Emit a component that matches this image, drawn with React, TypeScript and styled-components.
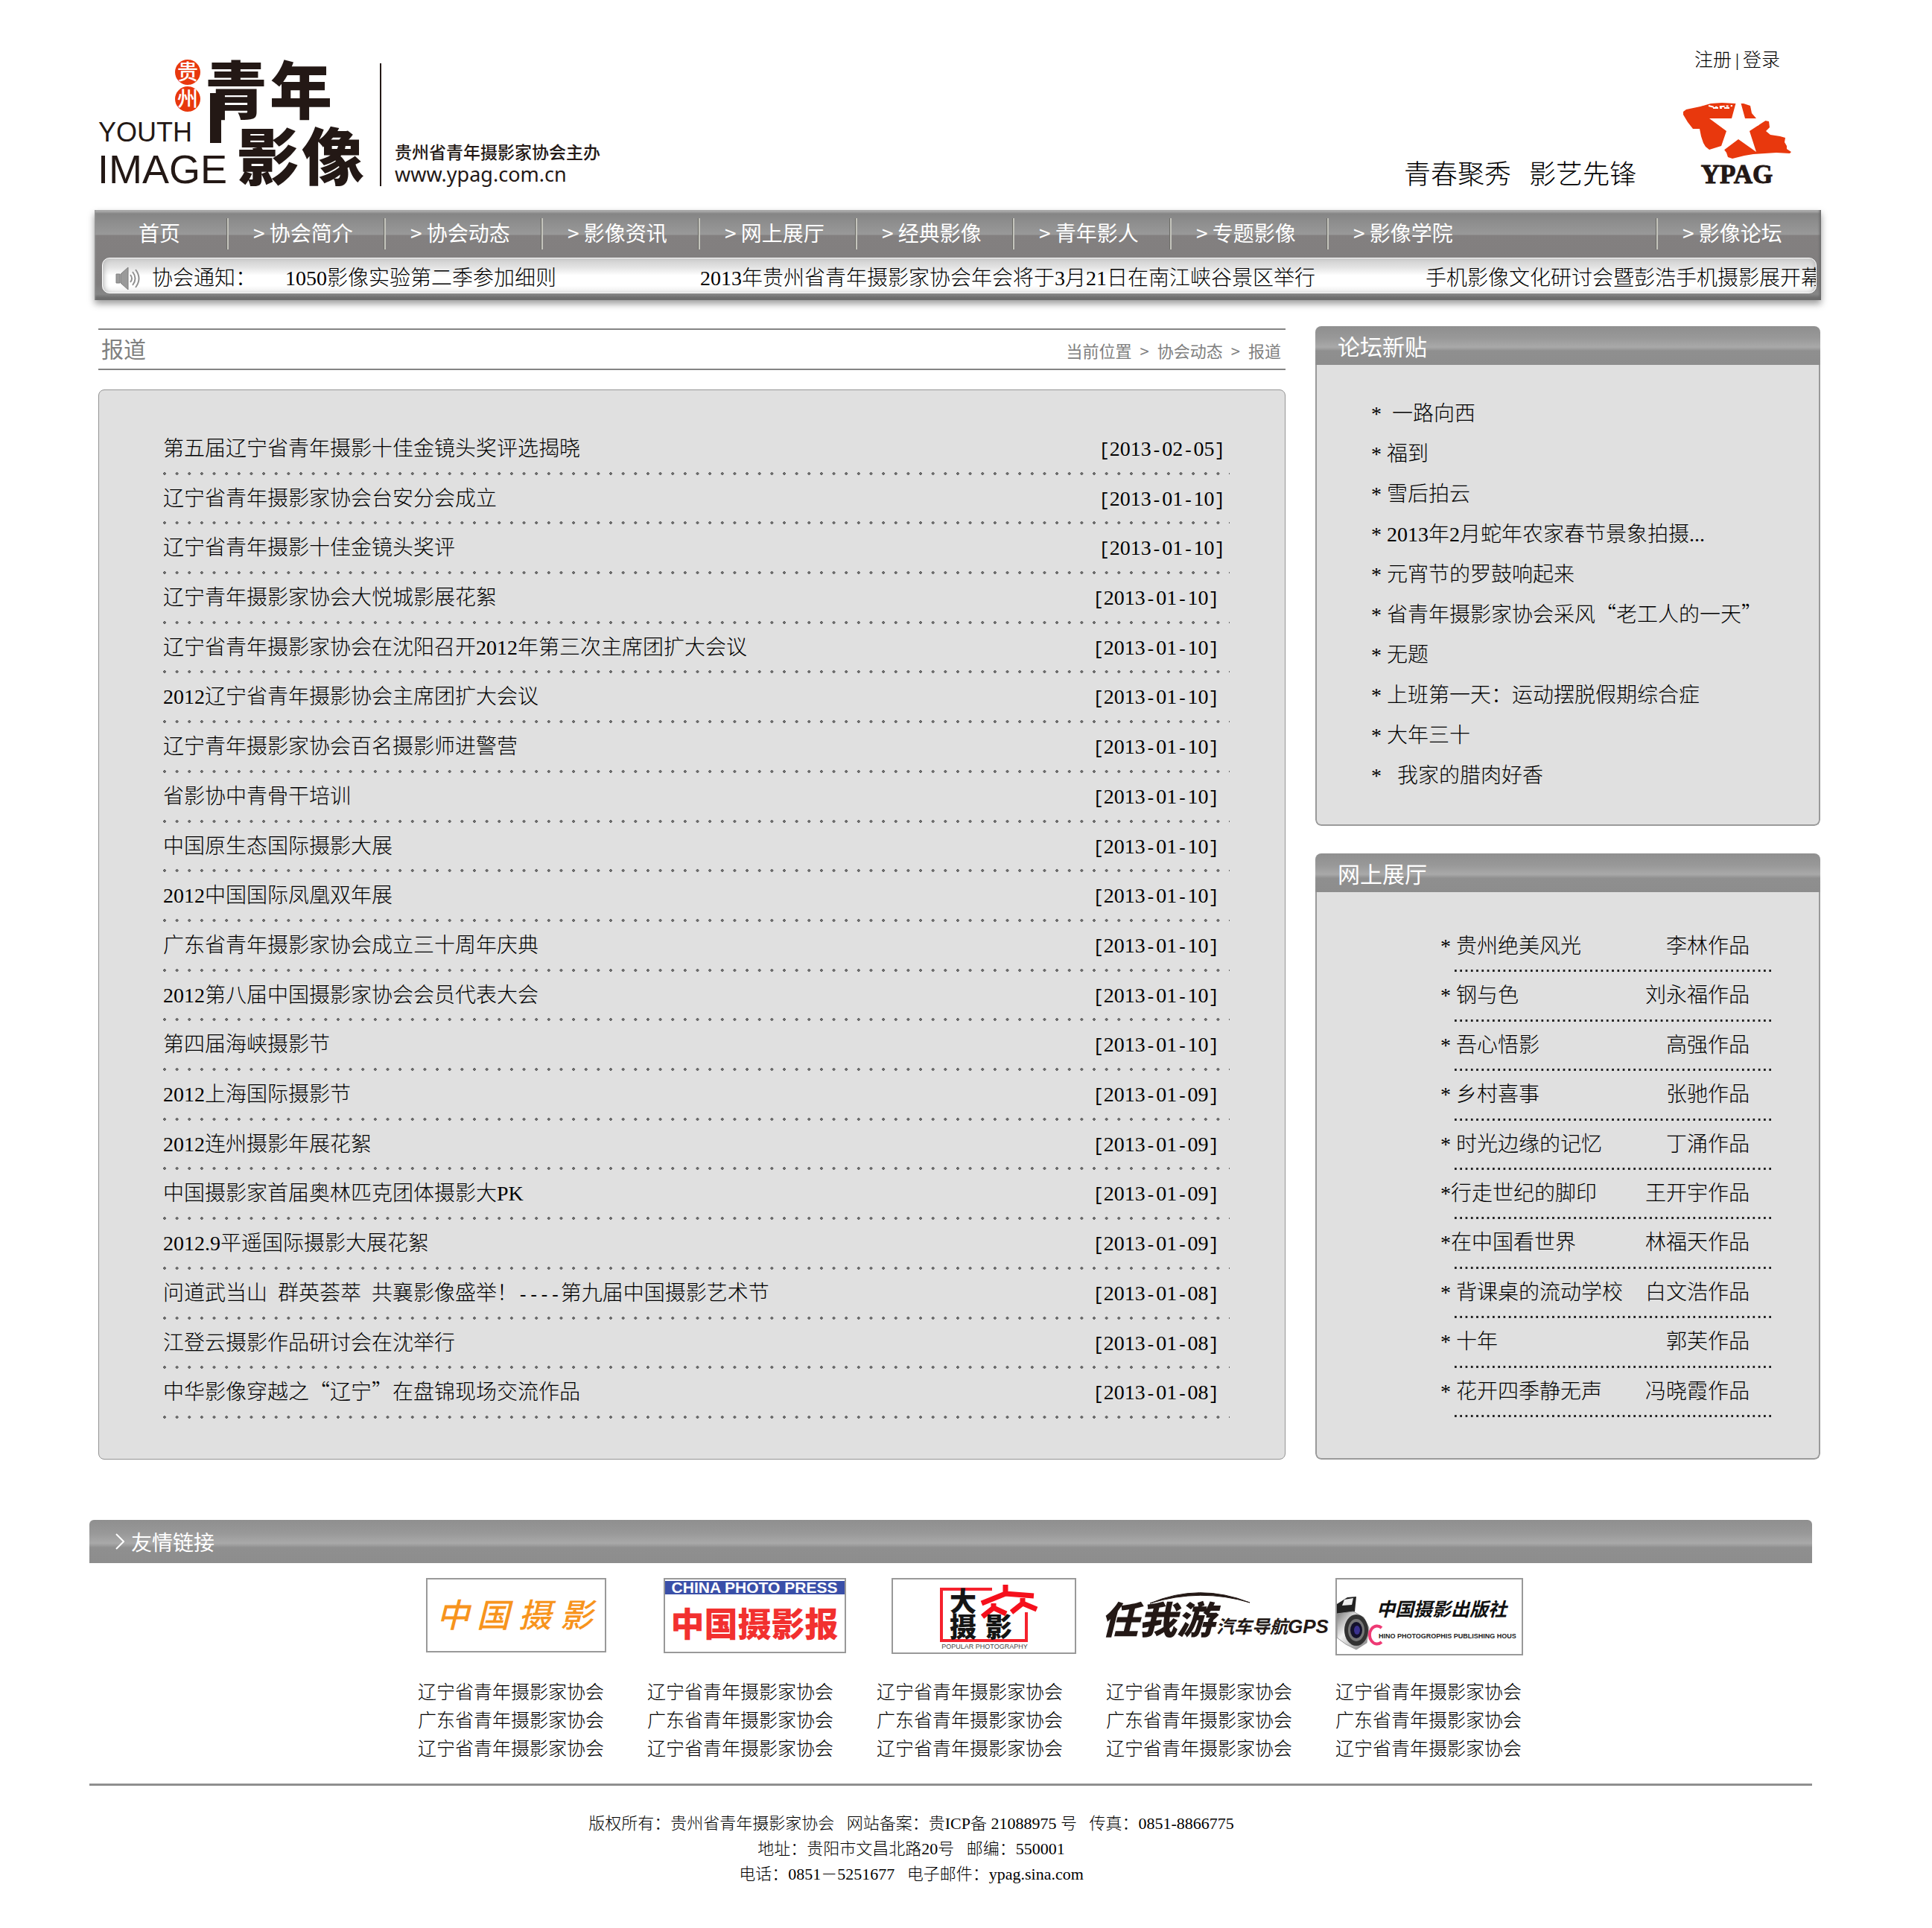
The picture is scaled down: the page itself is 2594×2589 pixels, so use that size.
import React from "react";
import styled, { createGlobalStyle } from "styled-components";

const song = `"Liberation Serif", "Noto Sans CJK SC", serif`;
const hei = `"Noto Sans CJK SC", sans-serif`;
const ink = "#231815";

const GlobalStyle = createGlobalStyle`
  *, *::before, *::after { box-sizing: border-box; }
  body { margin: 0; background: #fff; color: #000; font-family: ${song}; font-size: 28px; font-weight: 300; }
  a { color: inherit; text-decoration: none; }
  a:hover { text-decoration: underline; }
  ul, h1, h2, p { margin: 0; padding: 0; font-weight: inherit; }
  ul { list-style: none; }
  svg { display: block; flex: none; }
`;

const Shell = styled.div`
  padding: 0 149px 0 132px;
`;

const Header = styled.header`
  display: flex;
  justify-content: space-between;
  align-items: flex-end;
  padding: 64px 37px 32px 0;
`;

const Brand = styled.div`
  display: flex;
  align-items: flex-end;
`;

const BrandText = styled.div`
  margin-left: 20px;
  padding-left: 18px;
  height: 165px;
  border-left: 2px solid ${ink};
  display: flex;
  flex-direction: column;
  justify-content: flex-end;
  color: ${ink};
`;

const Host = styled.p`
  font: 500 23px/30px ${hei};
`;

const Site = styled.a`
  font: 400 27px/32px "Noto Sans", sans-serif;
`;

const HeaderSide = styled.div`
  display: flex;
  flex-direction: column;
  align-items: flex-end;
  gap: 39px;
`;

const Account = styled.div`
  display: flex;
  gap: 5px;
  padding-right: 18px;
  font-size: 25px;
  line-height: 34px;
`;

const Motto = styled.div`
  display: flex;
  align-items: flex-end;
  gap: 61px;
`;

const Slogan = styled.p`
  display: flex;
  gap: 24px;
  font-size: 36px;
  line-height: 30px;
`;

const NavBox = styled.div`
  margin-left: -5px;
  padding: 0 6px 9px 10px;
  background: linear-gradient(
    #b8b8b8 0, #a6a6a6 2px, #858585 5px, #8c8c8c 14px, #999 33px,
    #838080 34px, #7f7d7d 100px, #868686 113px, #6c6c6c 118px, #6c6c6c 100%
  );
  box-shadow: 0 5px 9px rgba(0, 0, 0, 0.4), inset -3px 0 3px -1px #6a6a6a, inset 2px 0 2px -1px #999;
`;

const Menu = styled.nav`
  display: flex;
  align-items: center;
  height: 64px;
`;

const MenuItem = styled.a<{ $last?: boolean }>`
  width: ${(p) => (p.$last ? 215 : 211)}px;
  padding: 0 0 4px 33px;
  margin-left: ${(p) => (p.$last ? "auto" : "0")};
  border-left: 2px solid #c4c4bc;
  box-shadow: -1px 0 0 #6b6b66;
  line-height: 38px;
  color: #fff;
  font-family: ${hei};
  font-weight: 400;
  white-space: nowrap;
`;

const HomeItem = styled(MenuItem)`
  width: 168px;
  padding-left: 49px;
  border-left: 0;
  box-shadow: none;
`;

const Notice = styled.div`
  display: flex;
  align-items: center;
  height: 48px;
  padding: 8px 0 0 17px;
  border: 1px solid #fff;
  border-radius: 10px;
  background: linear-gradient(#cdcdcd, #e2e2e2 25%, #fff 50%, #fff 80%, #ececec);
  box-shadow: inset 5px 0 6px -3px #bbb, inset -5px 0 6px -3px #bbb;
  overflow: hidden;
  white-space: nowrap;
  line-height: 40px;
`;

const NoticeLabel = styled.span`
  width: 179px;
  margin-left: 16px;
  flex: none;
`;

const NoticeLink = styled.a<{ $width: number }>`
  flex: 0 0 ${(p) => p.$width}px;
`;

const Main = styled.main`
  display: grid;
  grid-template-columns: minmax(0, 1fr) 678px;
  column-gap: 40px;
  margin-top: 35px;
  padding-right: 1px;
`;

const Reports = styled.section`
  display: flex;
  flex-direction: column;
  padding-top: 3px;
`;

const TitleBar = styled.div`
  display: flex;
  justify-content: space-between;
  align-items: center;
  height: 56px;
  padding: 0 6px 4px 4px;
  border: solid #848484;
  border-width: 2px 0;
  color: #808080;
  font-family: ${hei};
`;

const PageTitle = styled.h1`
  font-size: 30px;
  line-height: 40px;
  font-weight: 400;
`;

const Crumbs = styled.nav`
  display: flex;
  gap: 11px;
  padding-top: 6px;
  font-size: 22px;
  line-height: 32px;
  font-weight: 400;
`;

const Panel = styled.div`
  flex: 1;
  margin-top: 26px;
  padding: 47px 74px 54px 86px;
  border: 1px solid #949494;
  border-radius: 8px;
  background: #e0e0e0;
`;

const ReportList = styled.ul`
  display: grid;
  grid-template-rows: repeat(20, 1fr);
  min-height: 1334px;
`;

const ReportRow = styled.li`
  display: flex;
  justify-content: space-between;
  line-height: 64px;
  white-space: pre;
  background: radial-gradient(circle at 2px 2px, #aaa 0, #555 1px, #666 2px, transparent 2px) 0 100% /
    calc(100% / 86) 4px repeat-x;
`;

const ReportDate = styled.time<{ $wide: boolean }>`
  padding-right: ${(p) => (p.$wide ? 6 : 14)}px;
`;

const Cjk = styled.span`
  font-family: ${hei};
  line-height: 1;
`;

const Mono = styled.span`
  font-family: "Liberation Mono", monospace;
  font-size: 24px;
  line-height: 1;
`;

const Side = styled.aside`
  display: flex;
  flex-direction: column;
  gap: 37px;
`;

const Box = styled.section`
  border-radius: 8px;
  overflow: hidden;
`;

const shine = `linear-gradient(#8f8f8f, #989898 30%, #a9a9a9 54%, #8f8f8f 64%, #8d8d8d)`;

const BoxTitle = styled.h2`
  padding-left: 30px;
  background: ${shine};
  color: #fff;
  font: 400 30px/52px ${hei};
`;

const BoxBody = styled.div`
  border: solid #9a9a9a;
  border-width: 0 2px 2px;
  border-radius: 0 0 8px 8px;
  background: #e0e0e0;
`;

const ForumList = styled.ul`
  padding: 39px 0 38px 73px;
  line-height: 54px;
  white-space: pre;
`;

const ShowList = styled.ul`
  display: grid;
  grid-template-rows: repeat(10, 1fr);
  min-height: 760px;
  padding: 41px 60px 55px 184px;
`;

const ShowRow = styled.li`
  display: flex;
  justify-content: space-between;
  padding-right: 33px;
  line-height: 63px;
  white-space: pre;
  background: linear-gradient(90deg, #222 3px, transparent 3px) 1px 100% / calc(100% / 59) 3px repeat-x;
`;

const ShowName = styled.a`
  margin-left: -18px;
`;

const Friends = styled.section`
  margin-top: 81px;
  padding: 0 161px 0 120px;
`;

const FriendsTitle = styled.h2`
  display: flex;
  align-items: center;
  gap: 9px;
  height: 58px;
  padding-left: 35px;
  border-radius: 6px 6px 0 0;
  background: ${shine};
  color: #fff;
  font: 400 28px/40px ${hei};
`;

const FriendsBody = styled.div`
  display: flex;
  flex-direction: column;
  align-items: center;
  gap: 31px;
  padding: 20px 0 27px 53px;
  border-bottom: 3px solid #8f8f8f;
`;

const LogoRow = styled.div`
  display: grid;
  grid-template-columns: 319px 306px 283px 313px 252px;
  width: 1484px;
  padding-left: 11px;
`;

const LinkGrid = styled.div`
  display: grid;
  grid-template-columns: repeat(4, 308px) 252px;
  width: 1484px;
  font-size: 25px;
  line-height: 38px;
`;

const Footer = styled.footer`
  padding: 34px 267px 55px 120px;
  text-align: center;
  font-size: 22px;
  line-height: 34px;
  white-space: pre-wrap;
`;

const menu = ["协会简介", "协会动态", "影像资讯", "网上展厅", "经典影像", "青年影人", "专题影像", "影像学院"];

const notices = [
  { text: "1050影像实验第二季参加细则", width: 557 },
  { text: "2013年贵州省青年摄影家协会年会将于3月21日在南江峡谷景区举行", width: 974 },
  { text: "手机影像文化研讨会暨彭浩手机摄影展开幕", width: 540 },
];

const reports: [string, string][] = [
  ["第五届辽宁省青年摄影十佳金镜头奖评选揭晓", "2013-02-05"],
  ["辽宁省青年摄影家协会台安分会成立", "2013-01-10"],
  ["辽宁省青年摄影十佳金镜头奖评", "2013-01-10"],
  ["辽宁青年摄影家协会大悦城影展花絮", "2013-01-10"],
  ["辽宁省青年摄影家协会在沈阳召开2012年第三次主席团扩大会议", "2013-01-10"],
  ["2012辽宁省青年摄影协会主席团扩大会议", "2013-01-10"],
  ["辽宁青年摄影家协会百名摄影师进警营", "2013-01-10"],
  ["省影协中青骨干培训", "2013-01-10"],
  ["中国原生态国际摄影大展", "2013-01-10"],
  ["2012中国国际凤凰双年展", "2013-01-10"],
  ["广东省青年摄影家协会成立三十周年庆典", "2013-01-10"],
  ["2012第八届中国摄影家协会会员代表大会", "2013-01-10"],
  ["第四届海峡摄影节", "2013-01-10"],
  ["2012上海国际摄影节", "2013-01-09"],
  ["2012连州摄影年展花絮", "2013-01-09"],
  ["中国摄影家首届奥林匹克团体摄影大PK", "2013-01-09"],
  ["2012.9平遥国际摄影大展花絮", "2013-01-09"],
  ["问道武当山  群英荟萃  共襄影像盛举！----第九届中国摄影艺术节", "2013-01-08"],
  ["江登云摄影作品研讨会在沈举行", "2013-01-08"],
  ["中华影像穿越之“辽宁”在盘锦现场交流作品", "2013-01-08"],
];

const posts = [
  "*  一路向西",
  "* 福到",
  "* 雪后拍云",
  "* 2013年2月蛇年农家春节景象拍摄...",
  "* 元宵节的罗鼓响起来",
  "* 省青年摄影家协会采风“老工人的一天”",
  "* 无题",
  "* 上班第一天：运动摆脱假期综合症",
  "* 大年三十",
  "*   我家的腊肉好香",
];

const shows: [string, string][] = [
  ["* 贵州绝美风光", "李林作品"],
  ["* 钢与色", "刘永福作品"],
  ["* 吾心悟影", "高强作品"],
  ["* 乡村喜事", "张驰作品"],
  ["* 时光边缘的记忆", "丁涌作品"],
  ["*行走世纪的脚印", "王开宇作品"],
  ["*在中国看世界", "林福天作品"],
  ["* 背课桌的流动学校", "白文浩作品"],
  ["* 十年", "郭芙作品"],
  ["* 花开四季静无声", "冯晓霞作品"],
];

const partners = ["辽宁省青年摄影家协会", "广东省青年摄影家协会", "辽宁省青年摄影家协会"];

const typeset = (text: string) =>
  text.split(/([“”]|[[\]-]+)/).map((part, i) => {
    if (i % 2 === 0) return part;
    const Face = /[“”]/.test(part) ? Cjk : Mono;
    return <Face key={i}>{part}</Face>;
  });

const YouthImageLogo = () => (
  <svg width="358" height="172" viewBox="132 79 358 172" role="img" aria-label="贵州青年影像 YOUTH IMAGE">
    <g fill="#e8380d">
      <ellipse cx="252" cy="98" rx="17" ry="17" />
      <ellipse cx="252" cy="134" rx="17" ry="17" />
    </g>
    <g fill="#fff" fontFamily="Noto Sans CJK SC" fontWeight="500" fontSize="28" textAnchor="middle">
      <text x="252" y="108">贵</text>
      <text x="252" y="144">州</text>
    </g>
    <g fill={ink}>
      <g fontFamily="Liberation Sans">
        <text x="132" y="191" fontSize="36">YOUTH</text>
        <text x="131" y="247" fontSize="54">IMAGE</text>
      </g>
      <g fontFamily="Noto Sans CJK SC" fontWeight="900" fontSize="84">
        <text x="275" y="154">青</text>
        <text x="362" y="154">年</text>
        <text x="318" y="243">影</text>
        <text x="405" y="243">像</text>
      </g>
      <rect x="282" y="126" width="15" height="67" />
    </g>
  </svg>
);

const Emblem = () => (
  <svg width="150" height="113" viewBox="2258 138 150 113" role="img" aria-label="YPAG">
    <path
      fill="#e8380d"
      d="M2260 151L2264 148 2283 144 2290 142 2297 140 2312 139 2330 140 2341 140 2350 143 2352 153 2358 160 2360 170
        2364 166 2370 163 2375 164 2376 172 2371 177 2377 182 2390 184 2397 186 2396 192 2399 197 2399 201 2405 205 2403 207
        2385 206 2354 208 2342 210 2326 214 2320 212 2318 206 2315 202 2320 196 2311 197 2295 202 2290 198 2287 193
        2284 184 2282 174 2273 174 2266 165 2260 155z"
    />
    <path
      fill="#fff"
      d="M2331 138H2337L2343 160H2375L2349 177 2358 205 2334 188 2314 203 2309 203 2318 177 2295 160H2325z"
    />
    <path stroke="#fff" strokeWidth="2" strokeDasharray="7 2 3 3" fill="none" d="M2294 143l8 2 10-1 14-1M2300 146l24 0" />
    <text x="2332" y="247" textAnchor="middle" fontFamily="Liberation Serif" fontWeight="700" fontSize="35" fill={ink}
      stroke={ink}>
      YPAG
    </text>
  </svg>
);

const Speaker = () => (
  <svg width="33" height="32" viewBox="0 0 33 32" aria-hidden="true">
    <path d="M1 10h5v12H1zM7 10l10-9v30L7 22z" fill="#9a9a9a" stroke="#7f7f7f" />
    <path d="M20 11q4 5 0 10M23 7q7 9 0 18M27 4q9 12 0 24" fill="none" stroke="#909090" strokeWidth="2" />
  </svg>
);

const Chevron = () => (
  <svg width="12" height="22" viewBox="0 0 12 22" aria-hidden="true">
    <path d="M1 1l10 10L1 21" fill="none" stroke="#fff" strokeWidth="2" />
  </svg>
);

const Frame = ({ w, h }: { w: number; h: number }) => (
  <rect x="1" y="1" width={w - 2} height={h - 2} fill="#fff" stroke="#999" strokeWidth="2" />
);

const ChinaPhotoLogo = () => (
  <svg width="242" height="100" role="img" aria-label="中国摄影">
    <Frame w={242} h={100} />
    <g fill="#f7941d" fontFamily="Noto Sans CJK SC" fontWeight="500" fontStyle="italic" fontSize="44">
      <text x="14" y="66">中</text>
      <text x="68" y="66">国</text>
      <text x="124" y="66">摄</text>
      <text x="180" y="66">影</text>
    </g>
  </svg>
);

const PhotoPressLogo = () => (
  <svg width="245" height="101" role="img" aria-label="中国摄影报">
    <Frame w={245} h={101} />
    <rect x="2" y="4" width="241" height="18" fill="#3a4fa8" />
    <text x="122" y="20" textAnchor="middle" fontFamily="Liberation Sans" fontWeight="700" fontSize="21" fill="#fff">
      CHINA PHOTO PRESS
    </text>
    <text x="122" y="79" textAnchor="middle" fontFamily="Noto Sans CJK SC" fontWeight="900" fontSize="45" fill="#f2302f">
      中国摄影报
    </text>
  </svg>
);

const PopularLogo = () => (
  <svg width="248" height="102" role="img" aria-label="大众摄影">
    <Frame w={248} h={102} />
    <path d="M135 15H67v69h114V46" fill="none" stroke="#f5222d" strokeWidth="4" />
    <g fill="none" stroke="#f5101c" strokeWidth="7">
      <path d="M153 9v10M121 34l32-13 38 3" />
      <path d="M137 34v8M122 52l15-12 17 8" />
      <path d="M176 27v9M161 46l15-12 19 8" />
    </g>
    <g fill="#151515" fontFamily="Noto Sans CJK SC" fontWeight="900">
      <text x="78" y="45" fontSize="36">大</text>
      <text x="78" y="79" fontSize="36">摄</text>
      <text x="126" y="79" fontSize="36">影</text>
    </g>
    <text x="125" y="95" textAnchor="middle" fontFamily="Liberation Sans" fontSize="9" fill="#444">
      POPULAR PHOTOGRAPHY
    </text>
  </svg>
);

const GpsLogo = () => (
  <svg width="308" height="102" role="img" aria-label="任我游 汽车导航GPS">
    <path d="M64 34q66-28 134-1-66-20-134 1z" fill={ink} stroke={ink} />
    <g fill={ink} fontFamily="Noto Sans CJK SC" fontWeight="900" fontStyle="italic">
      <text x="-2" y="75" fontSize="51">任我游</text>
      <text x="153" y="74" fontSize="24" fontWeight="700">汽车导航</text>
      <text x="249" y="74" fontSize="26" fontWeight="700" fontFamily="Liberation Sans">
        GPS
      </text>
    </g>
  </svg>
);

const PublisherLogo = () => (
  <svg width="252" height="104" role="img" aria-label="中国摄影出版社">
    <defs>
      <linearGradient id="body" x1="0" y1="0" x2="1" y2="1">
        <stop offset="0" stopColor="#777" />
        <stop offset=".4" stopColor="#f4f4f4" />
        <stop offset="1" stopColor="#777" />
      </linearGradient>
    </defs>
    <Frame w={252} h={104} />
    <path d="M2 35l14-9 12-1-2 20-10 4L2 52z" fill="#222" />
    <path d="M9 37l3-8 12-2-2 9z" fill="#eee" />
    <path d="M2 48l22-3 14 8 7 14-3 20-14 9-14-7L2 80z" fill="url(#body)" stroke="#999" />
    <ellipse cx="28" cy="70" rx="16" ry="21" fill="#333" />
    <ellipse cx="28" cy="70" rx="11" ry="15" fill="#777" />
    <ellipse cx="28" cy="70" rx="8" ry="11" fill="#14122c" />
    <ellipse cx="29" cy="70" rx="4" ry="6" fill="#3b3290" />
    <text x="55" y="51" fontFamily="Noto Sans CJK SC" fontWeight="700" fontStyle="italic" fontSize="25" fill="#111">
      中国摄影出版社
    </text>
    <path d="M62 67a10 12 0 1 0 0 19" fill="none" stroke="#ee3a74" strokeWidth="4" />
    <text x="58" y="81" fontFamily="Liberation Sans" fontWeight="700" fontSize="9" fill="#222">
      HINO PHOTOGROPHIS PUBLISHING HOUS
    </text>
  </svg>
);

export default function App() {
  return (
    <>
      <GlobalStyle />
      <Shell>
        <Header>
          <Brand>
            <YouthImageLogo />
            <BrandText>
              <Host>贵州省青年摄影家协会主办</Host>
              <Site href="#home">www.ypag.com.cn</Site>
            </BrandText>
          </Brand>
          <HeaderSide>
            <Account>
              <a href="#register">注册</a>
              <span>|</span>
              <a href="#login">登录</a>
            </Account>
            <Motto>
              <Slogan>
                <span>青春聚秀</span>
                <span>影艺先锋</span>
              </Slogan>
              <Emblem />
            </Motto>
          </HeaderSide>
        </Header>

        <NavBox>
          <Menu>
            <HomeItem href="#home">首页</HomeItem>
            {menu.map((name) => (
              <MenuItem key={name} href="#menu">
                {"> " + name}
              </MenuItem>
            ))}
            <MenuItem $last href="#forum">
              {"> 影像论坛"}
            </MenuItem>
          </Menu>
          <Notice>
            <Speaker />
            <NoticeLabel>协会通知：</NoticeLabel>
            {notices.map((n) => (
              <NoticeLink key={n.text} $width={n.width} href="#notice">
                {n.text}
              </NoticeLink>
            ))}
          </Notice>
        </NavBox>

        <Main>
          <Reports>
            <TitleBar>
              <PageTitle>报道</PageTitle>
              <Crumbs>
                <span>当前位置</span>
                <span>&gt;</span>
                <a href="#news">协会动态</a>
                <span>&gt;</span>
                <a href="#reports">报道</a>
              </Crumbs>
            </TitleBar>
            <Panel>
              <ReportList>
                {reports.map(([title, date], i) => (
                  <ReportRow key={title}>
                    <a href="#report">{typeset(title)}</a>
                    <ReportDate $wide={i < 3} dateTime={date}>
                      {typeset(`[${date}]`)}
                    </ReportDate>
                  </ReportRow>
                ))}
              </ReportList>
            </Panel>
          </Reports>

          <Side>
            <Box>
              <BoxTitle>论坛新贴</BoxTitle>
              <BoxBody>
                <ForumList>
                  {posts.map((p) => (
                    <li key={p}>
                      <a href="#post">{typeset(p)}</a>
                    </li>
                  ))}
                </ForumList>
              </BoxBody>
            </Box>
            <Box>
              <BoxTitle>网上展厅</BoxTitle>
              <BoxBody>
                <ShowList>
                  {shows.map(([name, author]) => (
                    <ShowRow key={name}>
                      <ShowName href="#show">{name}</ShowName>
                      <span>{author}</span>
                    </ShowRow>
                  ))}
                </ShowList>
              </BoxBody>
            </Box>
          </Side>
        </Main>
      </Shell>

      <Friends>
        <FriendsTitle>
          <Chevron />
          友情链接
        </FriendsTitle>
        <FriendsBody>
          <LogoRow>
            <a href="#partner"><ChinaPhotoLogo /></a>
            <a href="#partner"><PhotoPressLogo /></a>
            <a href="#partner"><PopularLogo /></a>
            <a href="#partner"><GpsLogo /></a>
            <a href="#partner"><PublisherLogo /></a>
          </LogoRow>
          <LinkGrid>
            {partners.map((name, row) =>
              [0, 1, 2, 3, 4].map((col) => (
                <a key={`${row}-${col}`} href="#partner">
                  {name}
                </a>
              ))
            )}
          </LinkGrid>
        </FriendsBody>
      </Friends>

      <Footer>
        <p>{"版权所有：贵州省青年摄影家协会   网站备案：贵ICP备 21088975 号   传真：0851-8866775"}</p>
        <p>{"地址：贵阳市文昌北路20号   邮编：550001"}</p>
        <p>{"电话：0851－5251677   电子邮件：ypag.sina.com"}</p>
      </Footer>
    </>
  );
}
